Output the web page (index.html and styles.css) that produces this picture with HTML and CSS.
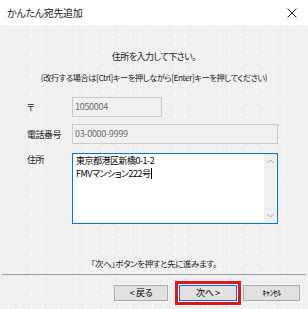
FILE: index.html
```
<!DOCTYPE html>
<html lang="ja">

<head>
    <meta charset="UTF-8">
    <meta name="viewport" content="width=device-width, initial-scale=1.0">
    <title>かんたん宛先追加</title>
    <link rel="stylesheet" href="styles.css">
</head>

<body>
    <div class="window">
        <!-- タイトルバー -->
        <div class="titlebar">
            <span class="title">かんたん宛先追加</span>
            <svg class="close" width="10" height="10" viewBox="0 0 10 10">
                <path d="M0.5 0.5 L9.5 9.5 M9.5 0.5 L0.5 9.5" stroke="#222" stroke-width="1" fill="none" />
            </svg>
        </div>

        <div class="dialog">
            <p class="msg">住所を入力して下さい。</p>
            <p class="msg sub">(改行する場合は[Ctrl]キーを押しながら[Enter]キーを押してください)</p>

            <div class="form">
                <label class="label">〒</label>
                <div class="input short">1050004</div>

                <label class="label">電話番号</label>
                <div class="input">03-0000-9999</div>

                <label class="label top">住所</label>
                <div class="textarea">
                    <div class="text">東京都港区新橋0-1-2<br>FMVマンション222号<span class="caret"></span></div>
                    <div class="scrollbar">
                        <svg width="7" height="5" viewBox="0 0 7 5">
                            <path d="M0.5 4 L3.5 1 L6.5 4" stroke="#a6a6a6" fill="none" />
                        </svg>
                        <svg width="7" height="5" viewBox="0 0 7 5">
                            <path d="M0.5 1 L3.5 4 L6.5 1" stroke="#a6a6a6" fill="none" />
                        </svg>
                    </div>
                </div>
            </div>

            <p class="note">「次へ」ボタンを押すと先に進みます。</p>

            <div class="separator"></div>

            <div class="buttons">
                <button class="btn back">&lt; 戻る</button>
                <button class="btn next">次へ &gt;</button>
                <button class="btn cancel">ｷｬﾝｾﾙ</button>
            </div>
        </div>
    </div>
</body>

</html>
```

FILE: styles.css
```
* {
    box-sizing: border-box;
}

body {
    margin: 0;
    font-family: "Noto Sans CJK JP", "Noto Sans", sans-serif;
    font-feature-settings: "palt";
    color: #1a1a1a;
}

.window {
    width: 308px;
    height: 309px;
    overflow: hidden;
}

/* タイトルバー */
.titlebar {
    height: 25px;
    background: #fff;
    display: flex;
    align-items: center;
    justify-content: space-between;
    padding: 0 11px 0 7px;
}

.title {
    font-size: 10px;
    letter-spacing: -0.3px;
    color: #1a1a1a;
}

.close {
    display: block;
}

/* 本体 */
.dialog {
    height: 284px;
    background-color: #f0f0f0;
    /* うっすらした点の模様 */
    background-image:
        radial-gradient(circle, rgba(255, 255, 255, 0.9) 0.5px, transparent 0.9px),
        radial-gradient(circle, rgba(255, 255, 255, 0.7) 0.5px, transparent 0.9px);
    background-size: 9px 8px, 11px 10px;
    background-position: 0 0, 4px 5px;
    padding-top: 25px;
}

.msg {
    margin: 0;
    text-align: center;
    font-size: 9px;
    letter-spacing: -0.5px;
    line-height: 14px;
}

.msg.sub {
    margin-top: 6px;
    font-size: 8.2px;
    letter-spacing: -0.4px;
}

.form {
    display: grid;
    grid-template-columns: 45px 206px;
    row-gap: 7px;
    padding-left: 27px;
    margin-top: 13px;
    align-items: center;
}

.label {
    font-size: 9px;
    letter-spacing: -0.5px;
}

.label.top {
    align-self: start;
    padding-top: 2px;
}

.input {
    height: 20px;
    border: 1px solid #cccccc;
    background: #f0f0f0;
    color: #6d6d6d;
    font-size: 9px;
    letter-spacing: -0.3px;
    line-height: 18px;
    padding-left: 2px;
}

.input.short {
    width: 90px;
}

.textarea {
    height: 71px;
    margin-top: 2px;
    border: 1px solid #0078d7;
    background: #fff;
    display: flex;
}

.textarea .text {
    flex: 1;
    font-size: 9px;
    letter-spacing: -0.5px;
    line-height: 13px;
    padding: 0 0 0 3px;
    color: #000;
}

.caret {
    display: inline-block;
    width: 1px;
    height: 11px;
    background: #000;
    vertical-align: -2px;
}

.scrollbar {
    width: 13px;
    background: #f0f0f0;
    display: flex;
    flex-direction: column;
    justify-content: space-between;
    align-items: center;
    padding: 5px 0 5px;
}

.scrollbar svg {
    display: block;
}

.note {
    margin: 32px 0 0;
    text-align: center;
    font-size: 8.5px;
    letter-spacing: -0.4px;
    line-height: 14px;
}

.separator {
    height: 1px;
    background: #a0a0a0;
    margin: 4px 2px 0;
}

/* ボタン */
.buttons {
    display: flex;
    justify-content: flex-end;
    padding-right: 8px;
    margin-top: 10px;
}

.btn {
    appearance: none;
    height: 16px;
    border: 1px solid #adadad;
    background: #e1e1e1;
    font-family: inherit;
    font-feature-settings: "palt";
    font-size: 9px;
    letter-spacing: -0.3px;
    line-height: 14px;
    padding: 0;
    color: #000;
    margin-left: 6px;
}

.btn.back {
    width: 54px;
}

.btn.next {
    width: 58px;
    margin-left: 11px;
    border-color: #0078d7;
    /* 赤い枠で強調 */
    outline: 3px solid #e3141b;
    outline-offset: 1px;
}

.btn.cancel {
    width: 57px;
    font-size: 8px;
}
```
